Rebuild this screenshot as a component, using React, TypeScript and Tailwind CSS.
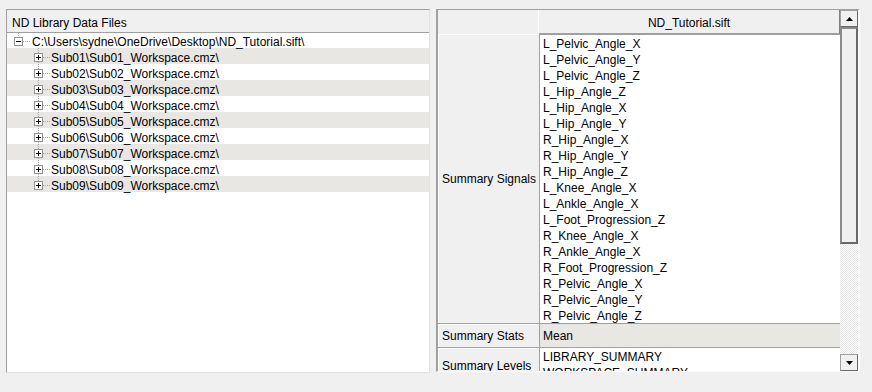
import React from "react";

const files = Array.from({ length: 9 }, (_, i) => {
  const n = String(i + 1).padStart(2, "0");
  return `Sub${n}\\Sub${n}_Workspace.cmz\\`;
});

const signals = [
  "L_Pelvic_Angle_X",
  "L_Pelvic_Angle_Y",
  "L_Pelvic_Angle_Z",
  "L_Hip_Angle_Z",
  "L_Hip_Angle_X",
  "L_Hip_Angle_Y",
  "R_Hip_Angle_X",
  "R_Hip_Angle_Y",
  "R_Hip_Angle_Z",
  "L_Knee_Angle_X",
  "L_Ankle_Angle_X",
  "L_Foot_Progression_Z",
  "R_Knee_Angle_X",
  "R_Ankle_Angle_X",
  "R_Foot_Progression_Z",
  "R_Pelvic_Angle_X",
  "R_Pelvic_Angle_Y",
  "R_Pelvic_Angle_Z",
];

const dot = { stroke: "#a0a0a0", strokeWidth: 1, strokeDasharray: "1 1" };

function ExpandBox({ x, y, open }: { x: number; y: number; open?: boolean }) {
  return (
    <g>
      <rect x={x + 0.5} y={y + 0.5} width={8} height={8} fill="#fff" stroke="#919191" />
      <line x1={x + 2} y1={y + 4.5} x2={x + 7} y2={y + 4.5} stroke="#000" />
      {!open && <line x1={x + 4.5} y1={y + 2} x2={x + 4.5} y2={y + 7} stroke="#000" />}
    </g>
  );
}

function TreeRoot() {
  return (
    <div className="flex h-[15px] items-start">
      <svg width="25" height="15" className="shrink-0">
        <line x1={11.5} y1={0} x2={11.5} y2={4} {...dot} />
        <ExpandBox x={7} y={4} open />
        <line x1={16} y1={8.5} x2={23} y2={8.5} {...dot} />
      </svg>
      <span className="relative whitespace-nowrap leading-[19px]">C:\Users\sydne\OneDrive\Desktop\ND_Tutorial.sift\</span>
    </div>
  );
}

function TreeChild({ label, index, last }: { label: string; index: number; last: boolean }) {
  return (
    <div className={`flex h-4 items-start ${index % 2 === 0 ? "bg-[#e8e7e3]" : "bg-white"}`}>
      <svg width="44" height="16" className="shrink-0">
        <line x1={31.5} y1={0} x2={31.5} y2={last ? 5 : 16} {...dot} />
        <ExpandBox x={27} y={5} />
        <line x1={36} y1={9.5} x2={43} y2={9.5} {...dot} />
      </svg>
      <span className="relative whitespace-nowrap leading-[20px]">{label}</span>
    </div>
  );
}

function ScrollButton({ up }: { up?: boolean }) {
  return (
    <div className="flex h-[17px] items-center justify-center border border-[#a0a0a0] border-b-[#696969] border-r-[#696969] bg-[#f0f0f0]">
      <svg width="7" height="4">
        <polygon points={up ? "3.5,0 7,4 0,4" : "0,0 7,0 3.5,4"} fill="#000" />
      </svg>
    </div>
  );
}

export default function App() {
  return (
    <div className="flex h-[392px] w-[872px] items-start gap-[6px] bg-[#f0f0f0] pl-[6px] pt-[9px] font-['Liberation_Sans',Arial,sans-serif] text-[12px] text-black">
      {/* left: library tree */}
      <div className="flex h-[364px] w-[424px] flex-col border border-[#a0a0a0] border-b-[#e3e3e3] border-r-[#e3e3e3] bg-white">
        <div className="h-[23px] border-b border-[#a0a0a0] bg-[#f0f0f0] pl-[5px] leading-[26px]">ND Library Data Files</div>
        <div className="flex flex-col">
          <TreeRoot />
          {files.map((f, i) => (
            <TreeChild key={f} label={f} index={i} last={i === files.length - 1} />
          ))}
        </div>
      </div>

      {/* right: property grid */}
      <div className="flex h-[363px] w-[424px] border-l-2 border-t border-[#a0a0a0] border-b border-r-2 border-b-[#fafafa] border-r-[#fafafa] bg-[#f0f0f0]">
        <div className="flex h-full w-[402px] flex-col overflow-hidden">
          <div className="flex h-[24px] shrink-0">
            <div className="w-[101px] border-r border-white" />
            <div className="flex flex-1 items-center justify-center border-b border-r border-[#a0a0a0] border-r-[#808080] pt-[2px]">
              ND_Tutorial.sift
            </div>
          </div>

          <div className="flex h-[289px] shrink-0">
            <div className="flex w-[101px] items-center border-l border-t border-white pl-[3px]">Summary Signals</div>
            <div className="flex flex-1 flex-col border-l border-t border-[#a0a0a0] bg-white pl-[3px] pt-[1px]">
              {signals.map((s) => (
                <div key={s} className="h-4 leading-4">
                  {s}
                </div>
              ))}
            </div>
          </div>

          <div className="flex h-[24px] shrink-0 border-t border-[#a0a0a0]">
            <div className="flex w-[101px] items-center border-l border-t border-white pl-[3px]">Summary Stats</div>
            <div className="flex flex-1 items-center border-l border-[#a0a0a0] bg-[#e8e7e3] pl-[3px]">Mean</div>
          </div>

          <div className="flex h-[36px] shrink-0 border-t border-[#a0a0a0]">
            <div className="flex w-[101px] items-center border-l border-t border-white pl-[3px]">Summary Levels</div>
            <div className="flex flex-1 flex-col border-l border-[#a0a0a0] bg-white pl-[3px] pt-[1px]">
              <div className="h-4 leading-4">LIBRARY_SUMMARY</div>
              <div className="h-4 leading-4">WORKSPACE_SUMMARY</div>
            </div>
          </div>
        </div>

        <div className="flex w-[18px] flex-col">
          <ScrollButton up />
          <div className="h-[217px] border-2 border-[#8a8a8a] border-b-[#696969] border-r-[#696969] bg-[#f0f0f0]" />
          <div className="flex-1 bg-[repeating-conic-gradient(#ffffff_0%_25%,#e6e6e6_0%_50%)] bg-[length:2px_2px]" />
          <ScrollButton />
        </div>
      </div>
    </div>
  );
}
